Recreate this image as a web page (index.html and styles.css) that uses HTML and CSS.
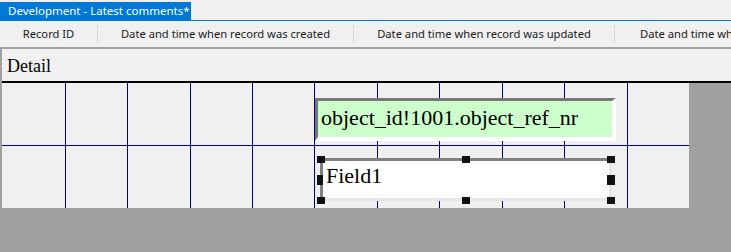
FILE: index.html
```html
<!DOCTYPE html>
<html>
<head>
<meta charset="utf-8">
<link rel="stylesheet" href="styles.css">
</head>
<body>
<div class="tabbar"><div class="tab">Development - Latest comments*</div></div>
<div class="header">
  <div class="col c1">Record ID</div>
  <div class="col c2">Date and time when record was created</div>
  <div class="col c3">Date and time when record was updated</div>
  <div class="col c4">Date and time when record was deleted</div>
</div>
<div class="design">
  <div class="section">Detail</div>
  <div class="body">
    <div class="canvas">
      <svg class="grid" width="687" height="125" viewBox="0 0 687 125">
        <g stroke="#000080" stroke-width="1" shape-rendering="crispEdges">
          <line x1="63.5" y1="0" x2="63.5" y2="125"/>
          <line x1="125.5" y1="0" x2="125.5" y2="125"/>
          <line x1="188.5" y1="0" x2="188.5" y2="125"/>
          <line x1="250.5" y1="0" x2="250.5" y2="125"/>
          <line x1="312.5" y1="0" x2="312.5" y2="125"/>
          <line x1="375.5" y1="0" x2="375.5" y2="125"/>
          <line x1="437.5" y1="0" x2="437.5" y2="125"/>
          <line x1="500.5" y1="0" x2="500.5" y2="125"/>
          <line x1="562.5" y1="0" x2="562.5" y2="125"/>
          <line x1="625.5" y1="0" x2="625.5" y2="125"/>
          <line x1="0" y1="62.5" x2="687" y2="62.5"/>
        </g>
      </svg>
      <div class="field green">object_id!1001.object_ref_nr</div>
      <div class="selected">
        <div class="field white">Field1</div>
        <span class="h tl"></span><span class="h tm"></span><span class="h tr"></span>
        <span class="h ml"></span><span class="h mr"></span>
        <span class="h bl"></span><span class="h bm"></span><span class="h br"></span>
      </div>
    </div>
  </div>
</div>
</body>
</html>
```

FILE: styles.css
```css
html, body {
  margin: 0;
  padding: 0;
}
body {
  width: 731px;
  height: 252px;
  overflow: hidden;
  background: #a0a0a0;
  font-family: "Noto Sans", "Open Sans", sans-serif;
}
.tabbar {
  height: 21px;
  padding-top: 2px;
  box-sizing: border-box;
  background: #f0f0f0;
  border-bottom: 1px solid #0078d7;
  display: flex;
}
.tab {
  width: 191px;
  height: 18px;
  background: #0078d7;
  color: #fff;
  font-size: 11.5px;
  line-height: 18px;
  padding-left: 8px;
  box-sizing: border-box;
  white-space: nowrap;
}
.header {
  height: 26px;
  background: #f0f0f0;
  display: flex;
  align-items: center;
  white-space: nowrap;
  overflow: hidden;
}
.col {
  flex: none;
  font-size: 11.2px;
  color: #1a1a1a;
  text-align: center;
  height: 18px;
  line-height: 18px;
  border-right: 1px solid #d6d6d6;
  box-sizing: border-box;
}
.c1 { width: 98px; }
.c2 { width: 256px; }
.c3 { width: 261px; }
.c4 { width: 116px; text-align: left; padding-left: 25px; border-right: none; overflow: hidden; }
.design {
  border-top: 2px solid #a0a0a0;
  border-left: 2px solid #a0a0a0;
}
.section {
  height: 32px;
  background: #f0f0f0;
  border-bottom: 2px solid #000;
  font-family: "Liberation Serif", "Times New Roman", serif;
  font-size: 18px;
  line-height: 34px;
  padding-left: 5px;
}
.body {
  display: flex;
}
.canvas {
  position: relative;
  width: 687px;
  height: 125px;
  background: #f0f0f0;
}
.grid {
  position: absolute;
  left: 0;
  top: 0;
}
.field {
  position: absolute;
  box-sizing: border-box;
  font-family: "Liberation Serif", "Times New Roman", serif;
  font-size: 22px;
  color: #000;
  white-space: nowrap;
}
.green {
  left: 313px;
  top: 15px;
  width: 301px;
  height: 43px;
  background: #ccffcc;
  border-style: solid;
  border-width: 3px 4px 4px 3px;
  border-color: #777 #fff #fff #777;
  padding-left: 3px;
  line-height: 34px;
}
.selected {
  position: absolute;
  left: 315px;
  top: 73px;
  width: 298px;
  height: 48px;
}
.white {
  left: 3px;
  top: 2px;
  width: 292px;
  height: 43px;
  background: #fff;
  border-style: solid;
  border-width: 3px 3px 3px 3px;
  border-color: #808080 #e6e6e6 #e6e6e6 #808080;
  padding-left: 3px;
  line-height: 30px;
}
.h {
  position: absolute;
  width: 8px;
  height: 7px;
  background: #111;
}
.tl { left: 0; top: 0; }
.tm { left: 145px; top: 0; }
.tr { right: 0; top: 0; }
.ml { left: 0; top: 19px; height: 10px; width: 6px; }
.mr { right: 0; top: 19px; height: 10px; }
.bl { left: 0; bottom: 0; }
.bm { left: 145px; bottom: 0; }
.br { right: 0; bottom: 0; }
```
